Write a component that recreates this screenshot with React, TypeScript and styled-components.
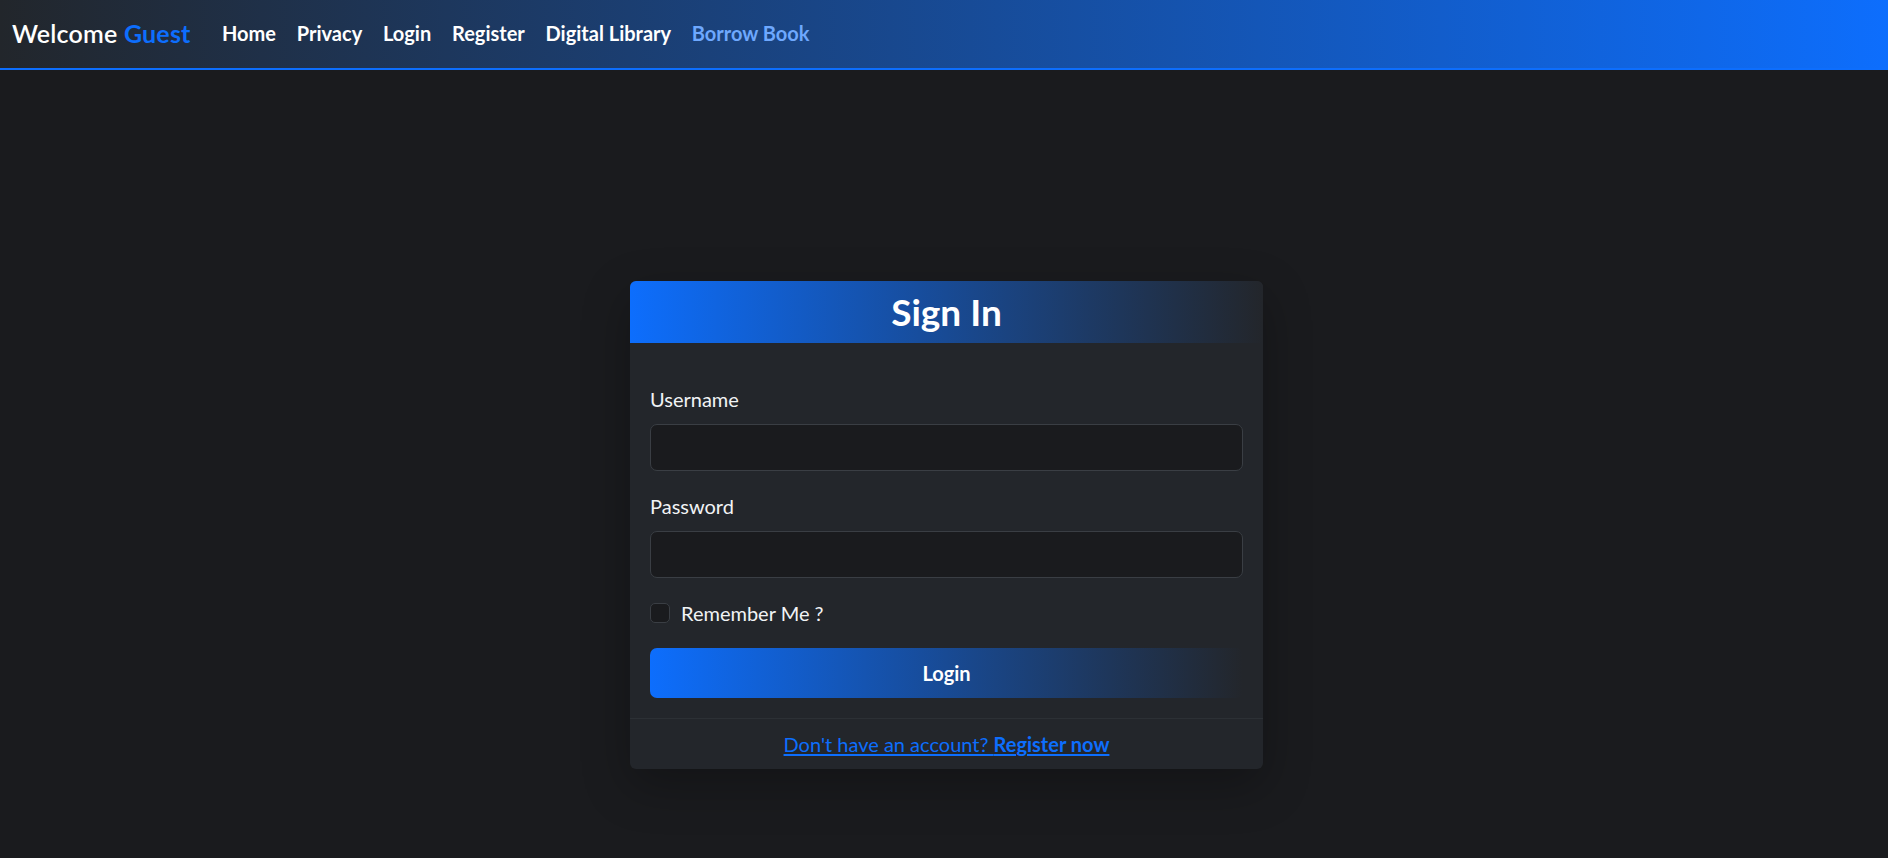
import React from "react";
import styled, { createGlobalStyle } from "styled-components";

const GlobalStyle = createGlobalStyle`
  html, body {
    margin: 0;
    padding: 0;
    background: #1a1b1e;
    font-family: Lato, "Open Sans", "Liberation Sans", sans-serif;
    color: #dee2e6;
  }
  * { box-sizing: border-box; }
`;

const Page = styled.div`
  min-height: 858px;
  background: #1a1b1e;
`;

const NavBar = styled.nav`
  height: 70px;
  display: flex;
  align-items: center;
  padding: 0 12px 2px;
  background: linear-gradient(to right, #22262b, #0d6efd);
  border-bottom: 2px solid #0d6efd;
`;

const Brand = styled.a`
  font-size: 25px;
  font-weight: 600;
  color: #ffffff;
  text-decoration: none;
  margin-right: 21px;
  letter-spacing: 0.2px;
`;

const BrandName = styled.span`
  color: #0d6efd;
  font-weight: 700;
`;

const NavList = styled.ul`
  display: flex;
  align-items: center;
  list-style: none;
  margin: 0;
  padding: 0;
`;

const NavLink = styled.a<{ $active?: boolean }>`
  display: block;
  padding: 0 10.4px;
  font-size: 20px;
  font-weight: 700;
  line-height: 30px;
  text-decoration: none;
  color: ${(p) => (p.$active ? "#6ea8fe" : "#ffffff")};
`;

const Main = styled.main`
  display: flex;
  justify-content: center;
  padding: 211px 0 0 5px;
`;

const Card = styled.section`
  width: 633px;
  background: #23262b;
  border-radius: 6px;
  overflow: hidden;
  box-shadow: 0 16px 48px rgba(0, 0, 0, 0.28);
`;

const CardHeader = styled.header`
  padding: 10px 20px;
  background: linear-gradient(to right, #0d6efd, #23262b);
  text-align: center;
`;

const Title = styled.h3`
  margin: 0;
  font-size: 37px;
  line-height: 42px;
  font-weight: 700;
  color: #ffffff;
`;

const CardBody = styled.form`
  padding: 41px 20px 20px;
`;

const Field = styled.div`
  margin-bottom: 20px;
`;

const Label = styled.label`
  display: block;
  font-size: 20px;
  line-height: 30px;
  margin-bottom: 10px;
  color: #f1f3f5;
`;

const Input = styled.input`
  display: block;
  width: 100%;
  height: 47px;
  padding: 7px 15px;
  font-size: 20px;
  color: #dee2e6;
  background: #1a1b1e;
  border: 1px solid #3a3e44;
  border-radius: 7px;
  outline: none;
  font-family: inherit;
`;

const CheckRow = styled.div`
  display: flex;
  align-items: center;
  gap: 11px;
  height: 30px;
  margin-bottom: 20px;
`;

const Checkbox = styled.input`
  appearance: none;
  width: 20px;
  height: 20px;
  margin: 0;
  background: #1a1b1e;
  border: 1px solid #3a3e44;
  border-radius: 5px;
`;

const CheckLabel = styled.label`
  font-size: 20px;
  line-height: 30px;
  color: #f1f3f5;
`;

const SubmitButton = styled.button`
  display: block;
  width: 100%;
  height: 50px;
  border: none;
  border-radius: 7px;
  background: linear-gradient(to right, #0d6efd, #23262b);
  color: #ffffff;
  font-family: inherit;
  font-size: 20px;
  font-weight: 700;
  cursor: pointer;
`;

const CardFooter = styled.footer`
  border-top: 1px solid #2c3035;
  padding: 10px 20px;
  text-align: center;
  font-size: 20px;
  line-height: 30px;
`;

const FooterLink = styled.a`
  color: #0d6efd;
  text-decoration: underline;
  text-underline-offset: 2px;
`;

export default function App() {
  const links = ["Home", "Privacy", "Login", "Register", "Digital Library"];
  return (
    <Page>
      <GlobalStyle />
      <NavBar>
        <Brand href="#">
          Welcome <BrandName>Guest</BrandName>
        </Brand>
        <NavList>
          {links.map((l) => (
            <li key={l}>
              <NavLink href="#">{l}</NavLink>
            </li>
          ))}
          <li>
            <NavLink href="#" $active>
              Borrow Book
            </NavLink>
          </li>
        </NavList>
      </NavBar>
      <Main>
        <Card>
          <CardHeader>
            <Title>Sign In</Title>
          </CardHeader>
          <CardBody onSubmit={(e) => e.preventDefault()}>
            <Field>
              <Label htmlFor="username">Username</Label>
              <Input id="username" type="text" />
            </Field>
            <Field>
              <Label htmlFor="password">Password</Label>
              <Input id="password" type="password" />
            </Field>
            <CheckRow>
              <Checkbox id="remember" type="checkbox" />
              <CheckLabel htmlFor="remember">Remember Me ?</CheckLabel>
            </CheckRow>
            <SubmitButton type="submit">Login</SubmitButton>
          </CardBody>
          <CardFooter>
            <FooterLink href="#">
              Don't have an account? <strong>Register now</strong>
            </FooterLink>
          </CardFooter>
        </Card>
      </Main>
    </Page>
  );
}
